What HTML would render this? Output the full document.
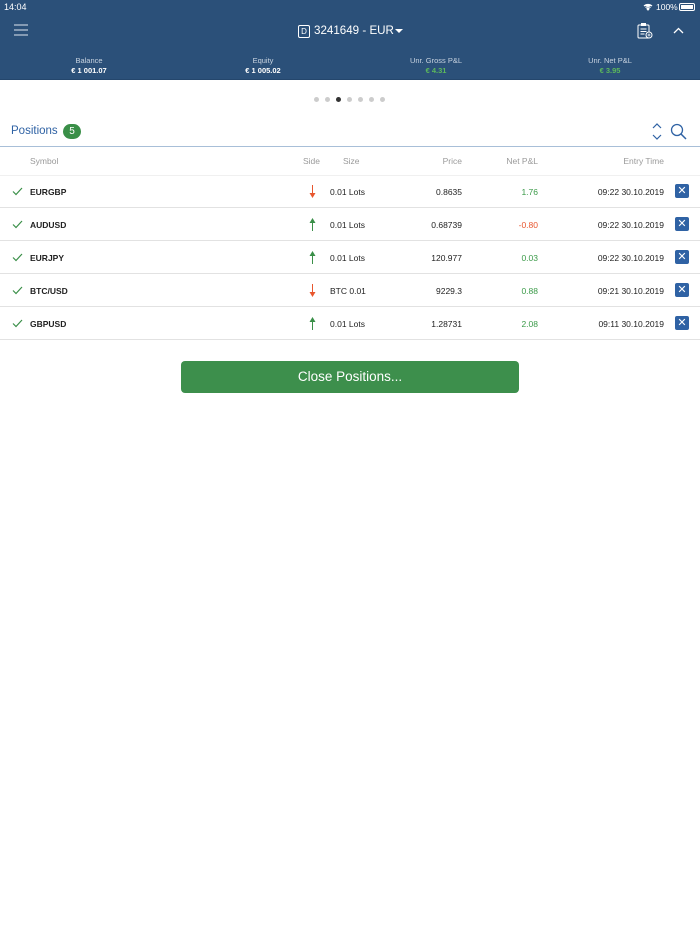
<!DOCTYPE html>
<html><head><meta charset="utf-8"><style>
*{margin:0;padding:0;box-sizing:border-box}
body{width:700px;height:934px;background:#fff;font-family:"Liberation Sans",sans-serif;position:relative;overflow:hidden;color:#222}
.hdr{position:absolute;left:0;top:0;width:700px;height:80px;background:#2b5079;border-bottom:1px solid #24466c;color:#fff}
.a{position:absolute}
.stat{position:absolute;top:56px;width:120px;text-align:center;font-size:7.5px;color:#c8d3e0;line-height:10px}
.stat b{display:block;font-weight:bold;color:#fff;font-size:7.5px}
.stat b.g{color:#5cb85c}
.dot{position:absolute;top:97px;width:5px;height:5px;border-radius:50%;background:#ccc}
.row{position:absolute;left:0;width:700px;height:33px;border-bottom:1px solid #e2e2e2;font-size:8.5px}
.row span{position:absolute;top:12px}
.th{position:absolute;top:156px;font-size:8.5px;color:#9a9a9a}
.x{position:absolute;left:675px;top:9px;width:14px;height:14px;background:#2f62a4;border-radius:2px;color:#fff;font-size:11px;text-align:center;line-height:14px}
</style></head><body>
<div class="hdr">
 <div class="a" style="left:4px;top:2px;font-size:9px">14:04</div>
 <div class="a" style="left:656px;top:2px;font-size:8.5px">100%</div>
 <svg class="a" style="left:643px;top:3px" width="10" height="8" viewBox="0 0 10 8"><path d="M1 3a6 6 0 0 1 8 0M2.5 4.5a4 4 0 0 1 5 0M5 7l1-1.2a1.5 1.5 0 0 0-2 0z" stroke="#fff" fill="#fff" stroke-width="1.2"/></svg>
 <div class="a" style="left:679px;top:3px;width:16px;height:8px;border:1px solid #fff;border-radius:2px;padding:1px"><div style="width:100%;height:100%;background:#fff"></div></div>
 <svg class="a" style="left:14px;top:24px" width="14" height="12"><path d="M0 1h14M0 6h14M0 11h14" stroke="#dfe6ee" stroke-width="1"/></svg>
 <div class="a" style="left:298px;top:25px;width:12px;height:13px;border:1px solid #fff;border-radius:2px;font-size:8px;text-align:center;line-height:11px">D</div>
 <div class="a" style="left:314px;top:24px;font-size:11.6px">3241649 - EUR</div>
 <svg class="a" style="left:395px;top:29px" width="8" height="5"><path d="M0 0h8L4 4z" fill="#fff"/></svg>
 <svg class="a" style="left:637px;top:22px" width="16" height="17" viewBox="0 0 16 17"><rect x="1" y="3" width="11" height="13" rx="1" stroke="#fff" fill="none"/><rect x="4" y="1" width="5" height="3" fill="#fff"/><path d="M3.5 7h6M3.5 9.5h6M3.5 12h4" stroke="#fff"/><circle cx="12" cy="13" r="3" fill="#2b5079" stroke="#fff"/><path d="M12 11.5v3M10.5 13h3" stroke="#fff" stroke-width=".8"/></svg>
 <svg class="a" style="left:673px;top:27px" width="11" height="7"><path d="M1 6l4.5-4.5L10 6" stroke="#fff" fill="none" stroke-width="1.3"/></svg>
 <div class="stat" style="left:29px">Balance<b>€ 1 001.07</b></div>
 <div class="stat" style="left:203px">Equity<b>€ 1 005.02</b></div>
 <div class="stat" style="left:376px">Unr. Gross P&amp;L<b class="g">€ 4.31</b></div>
 <div class="stat" style="left:550px">Unr. Net P&amp;L<b class="g">€ 3.95</b></div>
</div>
<div class="dot" style="left:314px"></div><div class="dot" style="left:325px"></div><div class="dot" style="left:336px;background:#333"></div><div class="dot" style="left:347px"></div><div class="dot" style="left:358px"></div><div class="dot" style="left:369px"></div><div class="dot" style="left:380px"></div>
<div class="a" style="left:11px;top:125px;font-size:11.5px;color:#2f62a4">Positions</div>
<div class="a" style="left:63px;top:124px;width:18px;height:15px;border-radius:8px;background:#3a8f48;color:#fff;font-size:10px;text-align:center;line-height:15px">5</div>
<svg class="a" style="left:651px;top:123px" width="12" height="17"><path d="M2 5l4-4 4 4M2 12l4 4 4-4" stroke="#2f62a4" fill="none" stroke-width="1.2"/></svg>
<svg class="a" style="left:670px;top:123px" width="17" height="17"><circle cx="7" cy="7" r="5.5" stroke="#2f62a4" fill="none" stroke-width="1.3"/><path d="M11 11l5 5" stroke="#2f62a4" stroke-width="1.5"/></svg>
<div class="a" style="left:0;top:146px;width:700px;height:1px;background:#a8bfd8"></div>
<div class="th" style="left:30px">Symbol</div><div class="th" style="left:303px">Side</div><div class="th" style="left:343px">Size</div>
<div class="th" style="left:400px;width:62px;text-align:right">Price</div><div class="th" style="left:480px;width:58px;text-align:right">Net P&amp;L</div><div class="th" style="left:580px;width:84px;text-align:right">Entry Time</div>
<div class="a" style="left:0;top:175px;width:700px;height:1px;background:#f0f0f0"></div>

<div class="row" style="top:175px"><svg class="a" style="left:12px;top:12px" width="11" height="9"><path d="M1 4.5l3 3L10 1" stroke="#3a8f48" fill="none" stroke-width="1.2"/></svg><span style="left:30px;font-weight:bold">EURGBP</span><svg class="a" style="left:309px;top:10px" width="7" height="13"><path d="M3.5 0v11" stroke="#e8562e"/><path d="M0.5 8l3 5 3-5z" fill="#e8562e"/></svg><span style="left:330px">0.01 Lots</span><span style="left:400px;width:62px;text-align:right">0.8635</span><span style="left:480px;width:58px;text-align:right;color:#3a9a48">1.76</span><span style="left:570px;width:94px;text-align:right">09:22 30.10.2019</span><div class="x">✕</div></div>
<div class="row" style="top:208px"><svg class="a" style="left:12px;top:12px" width="11" height="9"><path d="M1 4.5l3 3L10 1" stroke="#3a8f48" fill="none" stroke-width="1.2"/></svg><span style="left:30px;font-weight:bold">AUDUSD</span><svg class="a" style="left:309px;top:10px" width="7" height="13"><path d="M3.5 2v11" stroke="#3a8f48"/><path d="M0.5 5l3-5 3 5z" fill="#3a8f48"/></svg><span style="left:330px">0.01 Lots</span><span style="left:400px;width:62px;text-align:right">0.68739</span><span style="left:480px;width:58px;text-align:right;color:#e8562e">-0.80</span><span style="left:570px;width:94px;text-align:right">09:22 30.10.2019</span><div class="x">✕</div></div>
<div class="row" style="top:241px"><svg class="a" style="left:12px;top:12px" width="11" height="9"><path d="M1 4.5l3 3L10 1" stroke="#3a8f48" fill="none" stroke-width="1.2"/></svg><span style="left:30px;font-weight:bold">EURJPY</span><svg class="a" style="left:309px;top:10px" width="7" height="13"><path d="M3.5 2v11" stroke="#3a8f48"/><path d="M0.5 5l3-5 3 5z" fill="#3a8f48"/></svg><span style="left:330px">0.01 Lots</span><span style="left:400px;width:62px;text-align:right">120.977</span><span style="left:480px;width:58px;text-align:right;color:#3a9a48">0.03</span><span style="left:570px;width:94px;text-align:right">09:22 30.10.2019</span><div class="x">✕</div></div>
<div class="row" style="top:274px"><svg class="a" style="left:12px;top:12px" width="11" height="9"><path d="M1 4.5l3 3L10 1" stroke="#3a8f48" fill="none" stroke-width="1.2"/></svg><span style="left:30px;font-weight:bold">BTC/USD</span><svg class="a" style="left:309px;top:10px" width="7" height="13"><path d="M3.5 0v11" stroke="#e8562e"/><path d="M0.5 8l3 5 3-5z" fill="#e8562e"/></svg><span style="left:330px">BTC 0.01</span><span style="left:400px;width:62px;text-align:right">9229.3</span><span style="left:480px;width:58px;text-align:right;color:#3a9a48">0.88</span><span style="left:570px;width:94px;text-align:right">09:21 30.10.2019</span><div class="x">✕</div></div>
<div class="row" style="top:307px"><svg class="a" style="left:12px;top:12px" width="11" height="9"><path d="M1 4.5l3 3L10 1" stroke="#3a8f48" fill="none" stroke-width="1.2"/></svg><span style="left:30px;font-weight:bold">GBPUSD</span><svg class="a" style="left:309px;top:10px" width="7" height="13"><path d="M3.5 2v11" stroke="#3a8f48"/><path d="M0.5 5l3-5 3 5z" fill="#3a8f48"/></svg><span style="left:330px">0.01 Lots</span><span style="left:400px;width:62px;text-align:right">1.28731</span><span style="left:480px;width:58px;text-align:right;color:#3a9a48">2.08</span><span style="left:570px;width:94px;text-align:right">09:11 30.10.2019</span><div class="x">✕</div></div>

<div class="a" style="left:181px;top:361px;width:338px;height:32px;background:#3d8f4c;border-radius:4px;color:#fff;font-size:13.5px;text-align:center;line-height:32px">Close Positions...</div>
</body></html>
